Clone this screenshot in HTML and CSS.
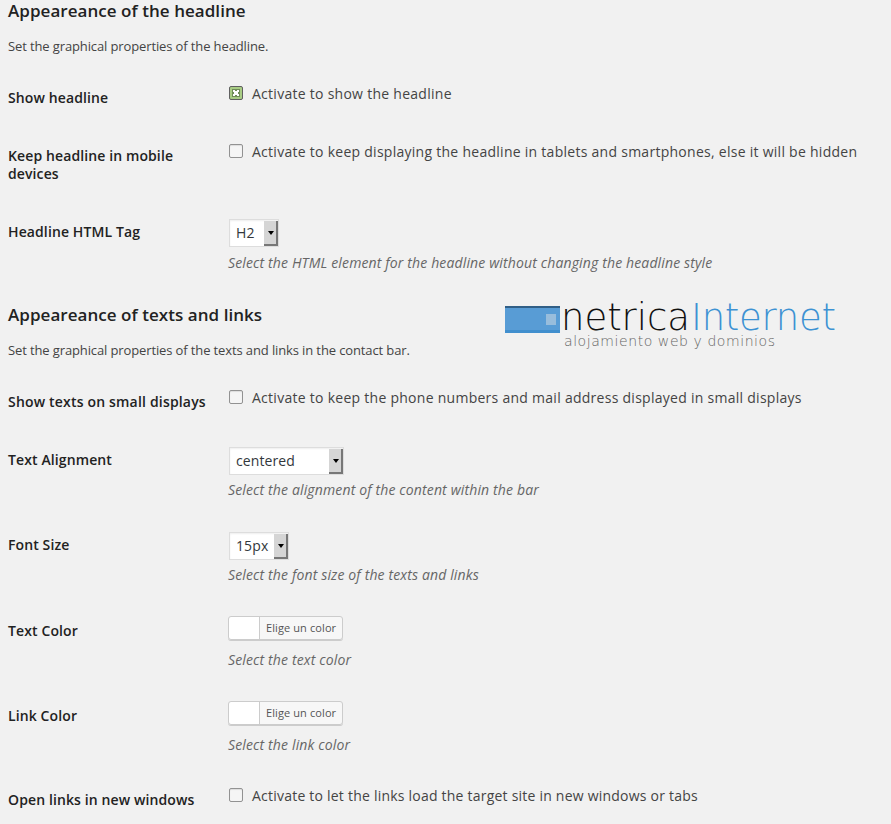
FILE: index.html
```html
<!DOCTYPE html>
<html lang="en">
<head>
    <meta charset="UTF-8">
    <title>Headline settings</title>
    <link rel="stylesheet" href="styles.css">
</head>
<body>

<div class="wrap">
    <h3>Appeareance of the headline</h3>
    <p class="intro">Set the graphical properties of the headline.</p>

    <div class="form-table">
        <div class="row">
            <div class="label"><span>Show headline</span></div>
            <div class="field">
                <label class="check">
                    <span class="box checked">
                        <svg width="14" height="14" viewBox="0 0 14 14" shape-rendering="crispEdges">
                            <rect x="3" y="3" width="8" height="8" fill="#6f8d57"/>
                            <path d="M4 4h2v1h2v-1h2v2h-1v2h1v2h-2v-1h-2v1h-2v-2h1v-2h-1z" fill="#fff"/>
                        </svg>
                    </span>
                    <span>Activate to show the headline</span>
                </label>
            </div>
        </div>
        <div class="row tall">
            <div class="label"><span>Keep headline in mobile<br>devices</span></div>
            <div class="field">
                <label class="check"><span class="box"></span><span>Activate to keep displaying the headline in tablets and smartphones, else it will be hidden</span></label>
            </div>
        </div>
        <div class="row control tag-row">
            <div class="label"><span>Headline HTML Tag</span></div>
            <div class="field">
                <div class="select tag"><span>H2</span><i class="arrow"></i></div>
                <p class="description"><span>Select the HTML element for the headline without changing the headline style</span></p>
            </div>
        </div>
    </div>

    <h3 class="second">Appeareance of texts and links</h3>
    <p class="intro">Set the graphical properties of the texts and links in the contact bar.</p>

    <div class="form-table">
        <div class="row">
            <div class="label wide"><span>Show texts on small displays</span></div>
            <div class="field">
                <label class="check"><span class="box"></span><span>Activate to keep the phone numbers and mail address displayed in small displays</span></label>
            </div>
        </div>
        <div class="row control">
            <div class="label"><span>Text Alignment</span></div>
            <div class="field">
                <div class="select align"><span>centered</span><i class="arrow"></i></div>
                <p class="description"><span>Select the alignment of the content within the bar</span></p>
            </div>
        </div>
        <div class="row control size-row">
            <div class="label"><span>Font Size</span></div>
            <div class="field">
                <div class="select size"><span>15px</span><i class="arrow"></i></div>
                <p class="description"><span>Select the font size of the texts and links</span></p>
            </div>
        </div>
        <div class="row control">
            <div class="label"><span>Text Color</span></div>
            <div class="field color-field">
                <div class="color-button"><span>Elige un color</span></div>
                <p class="description"><span>Select the text color</span></p>
            </div>
        </div>
        <div class="row control last-color">
            <div class="label"><span>Link Color</span></div>
            <div class="field color-field">
                <div class="color-button"><span>Elige un color</span></div>
                <p class="description"><span>Select the link color</span></p>
            </div>
        </div>
        <div class="row windows-row">
            <div class="label"><span>Open links in new windows</span></div>
            <div class="field">
                <label class="check"><span class="box"></span><span>Activate to let the links load the target site in new windows or tabs</span></label>
            </div>
        </div>
    </div>

    <svg class="watermark" width="340" height="60" viewBox="0 0 340 60">
        <rect x="0" y="6" width="55" height="27" fill="#589cd5"/>
        <rect x="0" y="6" width="55" height="2" fill="#315f86"/>
        <rect x="0" y="30" width="55" height="3" fill="#418fce"/>
        <rect x="41" y="14" width="10" height="11" fill="#98bddc"/>
        <text class="logo-dark" x="56" y="30" textLength="129">netrica</text>
        <text class="logo-blue" x="186" y="30" textLength="145">Internet</text>
        <text class="logo-sub" x="59" y="46" textLength="211">alojamiento web y dominios</text>
    </svg>
</div>

</body>
</html>
```

FILE: styles.css
```css
body {
    margin: 0;
    height: 824px;
    overflow: hidden;
    background-color: #f1f1f1;
    color: #444;
    font-family: "Open Sans", sans-serif;
    font-size: 14px;
    line-height: 18px;
}

.wrap {
    position: relative;
    padding-left: 8px;
}

h3 {
    margin: 0;
    height: 22px;
    color: #222;
    font-size: 17px;
    font-weight: 600;
    line-height: 22px;
    letter-spacing: 0.05px;
}

h3.second {
    padding-top: 16px;
}

.intro {
    margin: 0;
    padding-top: 15px;
    height: 32px;
    font-size: 13px;
    line-height: 19px;
    letter-spacing: -0.12px;
}

.row {
    display: flex;
    height: 58px;
}

.row.tall {
    height: 76px;
}

.row.control {
    height: 85px;
}

.row.size-row {
    height: 86px;
}

.row.last-color {
    height: 84px;
}

.label {
    width: 220px;
    padding-top: 20px;
    box-sizing: border-box;
    flex-shrink: 0;
    color: #222;
    font-weight: 600;
    letter-spacing: 0.11px;
}

.label.wide {
    letter-spacing: 0.18px;
}

.field {
    padding-top: 16px;
    white-space: nowrap;
}

.check {
    display: flex;
    margin-left: 1px;
    gap: 9px;
    letter-spacing: 0.27px;
}

.windows-row .check {
    letter-spacing: 0.22px;
}

.box {
    width: 14px;
    height: 14px;
    margin-top: 1px;
    box-sizing: border-box;
    border: 1px solid #929292;
    border-radius: 2px;
    background-color: #f5f5f5;
    box-shadow: inset 0 1px 1px #ddd;
}

.box.checked {
    border-color: #606060;
    background-color: #a9cd85;
    box-shadow: none;
}

.box svg {
    display: block;
    margin: -1px;
}

.select {
    display: flex;
    justify-content: space-between;
    height: 28px;
    margin-left: 1px;
    padding: 1px 0 0 6px;
    box-sizing: border-box;
    border: 1px solid #ddd;
    background-color: #fff;
    box-shadow: inset 0 1px 2px #eee;
    color: #32373c;
    line-height: 24px;
    letter-spacing: 0.1px;
}

.select.tag {
    width: 50px;
}

.select.align {
    width: 115px;
}

.select.size {
    width: 60px;
}

.arrow {
    display: flex;
    align-items: center;
    justify-content: center;
    width: 14px;
    box-sizing: border-box;
    padding-left: 1px;
    border-right: 2px solid #777;
    border-bottom: 2px solid #777;
    background-color: #d5d5d5;
}

.arrow::before {
    content: "";
    border: 3px solid transparent;
    border-top: 4px solid #000;
    border-bottom: 0;
}

.description {
    margin: 0;
    padding-top: 6px;
    color: #666;
    font-style: italic;
    letter-spacing: 0.14px;
}

.tag-row .description {
    padding-top: 7px;
}

.color-field {
    padding-top: 14px;
}

.color-button {
    width: 115px;
    height: 24px;
    padding-left: 31px;
    box-sizing: border-box;
    border: 1px solid #ccc;
    border-radius: 3px;
    background: linear-gradient(to right, #fff 30px, #ccc 30px, #ccc 31px, #f7f7f7 31px);
    box-shadow: 0 1px 0 #ccc;
    color: #555;
    font-size: 11px;
    line-height: 22px;
    letter-spacing: 0.1px;
}

.color-button span {
    padding-left: 6px;
}

.color-field .description {
    padding-top: 11px;
}

/* logo sits over the form */
.watermark {
    position: absolute;
    top: 300px;
    left: 505px;
    font-family: "DejaVu Sans Light", "DejaVu Sans", sans-serif;
    font-weight: 200;
}

.logo-dark,
.logo-blue {
    font-size: 37px;
}

.logo-dark {
    fill: #111;
}

.logo-blue {
    fill: #3d92d3;
}

.logo-sub {
    fill: #666;
    font-size: 14px;
}
```
